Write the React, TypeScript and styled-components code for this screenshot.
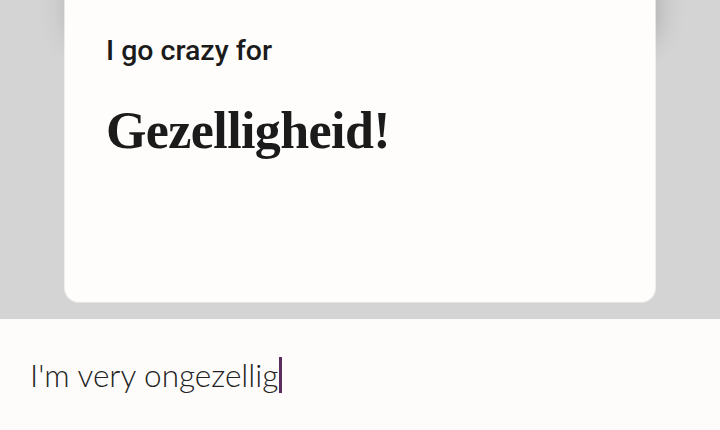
import React from "react";
import styled, { createGlobalStyle } from "styled-components";

const Global = createGlobalStyle`
  html, body { margin: 0; padding: 0; background: #fdfcfa; }
  body { width: 720px; height: 430px; overflow: hidden; }
`;

const Page = styled.div`
  width: 720px;
  height: 430px;
  display: flex;
  flex-direction: column;
  overflow: hidden;
`;

const Stage = styled.section`
  height: 319px;
  flex: none;
  background: #d4d4d4;
  display: flex;
  justify-content: center;
  align-items: flex-end;
  padding-bottom: 17px;
  box-sizing: border-box;
  overflow: hidden;
  position: relative;
  isolation: isolate;
`;

const Card = styled.article`
  position: relative;
  width: 590px;
  height: 340px;
  flex: none;
  box-sizing: border-box;
  background: #fefdfb;
  border-radius: 14px;
  box-shadow: 0 1px 0 #e4e3e1, 0 0 0 1px rgba(255,255,255,0.6);
  padding: 73px 0 0 41px;
  display: flex;
  flex-direction: column;
  &::before {
    content: "";
    position: absolute;
    left: 8px;
    right: 8px;
    top: -60px;
    height: 140px;
    border-radius: 14px;
    box-shadow: 10px 0 28px rgba(0, 0, 0, 0.2), -10px 0 28px rgba(0, 0, 0, 0.1);
    z-index: -1;
  }
`;

const Lead = styled.p`
  margin: 0;
  font-family: Roboto, Lato, sans-serif;
  font-weight: 500;
  font-size: 28.5px;
  line-height: 32px;
  color: #1b1b1b;
`;

const Headline = styled.h1`
  margin: 34px 0 0;
  font-family: "Liberation Serif", "DejaVu Serif", serif;
  font-weight: 700;
  font-size: 52px;
  line-height: 60px;
  letter-spacing: -0.6px;
  color: #1b1b1b;
`;

const Composer = styled.div`
  flex: 1;
  background: #fdfcfa;
  display: flex;
  align-items: flex-start;
  padding: 36px 0 0 30px;
  box-sizing: border-box;
`;

const Typed = styled.span`
  font-family: Lato, "Noto Sans", sans-serif;
  font-weight: 300;
  font-size: 31.5px;
  line-height: 40px;
  color: #222222;
  display: inline-flex;
  align-items: center;
`;

const Caret = styled.span`
  display: inline-block;
  width: 3px;
  height: 36px;
  margin-left: 1px;
  background: #5a2d5c;
`;

export default function App() {
  return (
    <Page>
      <Global />
      <Stage>
        <Card>
          <Lead>I go crazy for</Lead>
          <Headline>Gezelligheid!</Headline>
        </Card>
      </Stage>
      <Composer>
        <Typed>
          I'm very ongezellig
          <Caret />
        </Typed>
      </Composer>
    </Page>
  );
}
